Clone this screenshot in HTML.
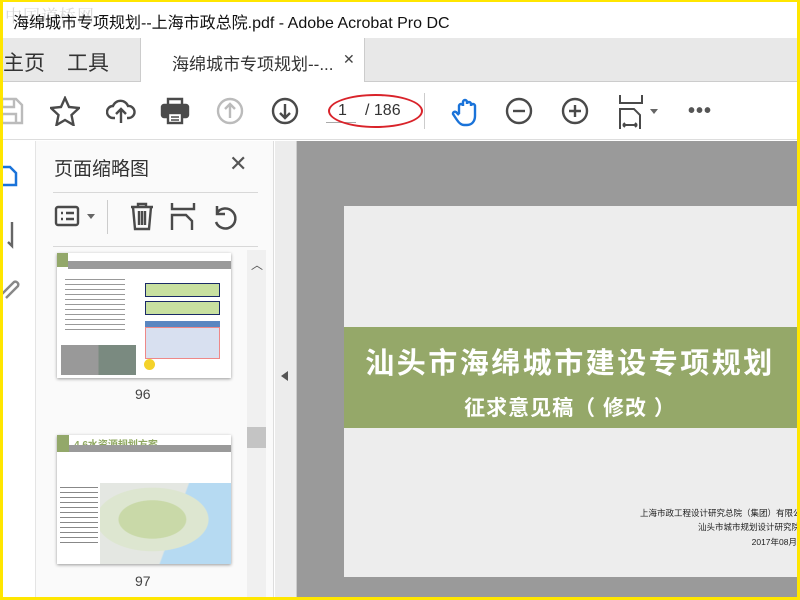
<!DOCTYPE html>
<html><head><meta charset="utf-8"><style>
*{margin:0;padding:0;box-sizing:border-box}
body{width:800px;height:600px;overflow:hidden;position:relative;background:#fff;font-family:"Liberation Sans","Noto Sans CJK SC",sans-serif;color:#222}
.a{position:absolute}
svg{position:absolute;fill:none;stroke:#4a4a4a;stroke-width:2.4}
</style></head><body>
<div class="a" style="left:0;top:0;width:800px;height:38px;background:#fff"></div>
<div class="a" style="left:5px;top:2px;font-size:17px;color:#d8d8d8;letter-spacing:1px;font-family:'Noto Serif CJK SC',serif">中国道桥网</div>
<div class="a" style="left:13px;top:9px;font-size:16px;color:#111">海绵城市专项规划--上海市政总院.pdf - Adobe Acrobat Pro DC</div>
<div class="a" style="left:0;top:38px;width:800px;height:44px;background:#e8e8e8;border-bottom:1px solid #ccc"></div>
<div class="a" style="left:3px;top:47px;font-size:21px;color:#333">主页</div>
<div class="a" style="left:67px;top:47px;font-size:21px;color:#333">工具</div>
<div class="a" style="left:140px;top:38px;width:225px;height:45px;background:#fff;border-left:1px solid #ccc;border-right:1px solid #ccc"></div>
<div class="a" style="left:172px;top:50px;font-size:17px;color:#333">海绵城市专项规划--...</div>
<div class="a" style="left:343px;top:51px;font-size:14px;color:#444">✕</div>
<div class="a" style="left:0;top:82px;width:800px;height:58px;background:#fff;border-bottom:1px solid #ddd"></div>
<svg style="left:0;top:96px" width="24" height="30" viewBox="0 0 24 30"><path d="M-4 3H16l6 6v18H-4z M2 3v8h12V3 M2 27v-9h14v9" stroke="#bbb"/></svg>
<svg style="left:50px;top:96px" width="30" height="30" viewBox="0 0 30 30"><path d="M15 2l4 9 10 1-7.5 7 2 10L15 24l-8.5 5 2-10L1 12l10-1z"/></svg>
<svg style="left:106px;top:96px" width="30" height="30" viewBox="0 0 30 30"><path d="M9 22H7a6 6 0 010-12 8 8 0 0115 0 5 5 0 011 12h-2 M15 27V13 M10 18l5-5 5 5"/></svg>
<svg style="left:160px;top:96px" width="30" height="30" viewBox="0 0 30 30"><path d="M8 9V3h14v6" /><rect x="2" y="9" width="26" height="12" rx="2" fill="#4a4a4a"/><rect x="8" y="17" width="14" height="10" fill="#fff"/><path d="M11 21h8M11 24h8" stroke-width="1.5"/></svg>
<svg style="left:216px;top:97px" width="28" height="28" viewBox="0 0 28 28"><circle cx="14" cy="14" r="12" stroke="#bbb"/><path d="M14 21V8M9 12l5-5 5 5" stroke="#bbb"/></svg>
<svg style="left:271px;top:97px" width="28" height="28" viewBox="0 0 28 28"><circle cx="14" cy="14" r="12"/><path d="M14 7v13M9 16l5 5 5-5"/></svg>
<div class="a" style="left:326px;top:99px;width:30px;height:24px;border-bottom:1px solid #aaa"></div>
<div class="a" style="left:338px;top:102px;font-size:16px;color:#333">1</div>
<div class="a" style="left:365px;top:102px;font-size:16px;color:#333">/ 186</div>
<div class="a" style="left:328px;top:94px;width:95px;height:34px;border:2.5px solid #d9232a;border-radius:50%"></div>
<div class="a" style="left:424px;top:93px;width:1px;height:36px;background:#ccc"></div>
<svg style="left:450px;top:96px" width="32" height="32" viewBox="0 0 32 32"><path d="M9 18V10a2 2 0 014 0V6a2 2 0 014 0v2a2 2 0 014 0v2a2 2 0 014 0v10c0 5-3 9-8 9h-3c-3 0-5-2-7-5l-4-6a2 2 0 013-2l3 3" stroke="#1a73d9"/></svg>
<svg style="left:505px;top:97px" width="28" height="28" viewBox="0 0 28 28"><circle cx="14" cy="14" r="12"/><path d="M8 14h12"/></svg>
<svg style="left:561px;top:97px" width="28" height="28" viewBox="0 0 28 28"><circle cx="14" cy="14" r="12"/><path d="M8 14h12M14 8v12"/></svg>
<svg style="left:617px;top:95px" width="28" height="34" viewBox="0 0 28 34"><path d="M3 0v8h22V0 M3 34V14h14l6 6v14 M6 30h14M6 30l2-2M6 30l2 2M20 30l-2-2M20 30l-2 2" stroke-width="2"/></svg>
<div class="a" style="left:650px;top:109px;border:4px solid transparent;border-top:5px solid #666"></div>
<div class="a" style="left:688px;top:100px;font-size:20px;color:#555;letter-spacing:1px;font-weight:bold">•••</div>
<div class="a" style="left:0;top:141px;width:36px;height:459px;background:#fff;border-right:1px solid #e4e4e4"></div>
<svg style="left:0;top:163px" width="22" height="28" viewBox="0 0 22 28"><path d="M-4 4h14l6 6v12H-4z" stroke="#1a73d9" stroke-width="2.5"/></svg>
<svg style="left:0;top:220px" width="18" height="30" viewBox="0 0 18 30"><path d="M12 2v24l-4-4" stroke="#666"/></svg>
<svg style="left:0;top:274px" width="22" height="28" viewBox="0 0 22 28"><path d="M2 20l12-12a3 3 0 014 4L6 24" stroke="#888"/></svg>
<div class="a" style="left:36px;top:141px;width:238px;height:459px;background:#fafafa;border-right:1px solid #ddd"></div>
<div class="a" style="left:54px;top:154px;font-size:19px;color:#333">页面缩略图</div>
<div class="a" style="left:229px;top:151px;font-size:22px;color:#555">✕</div>
<div class="a" style="left:53px;top:192px;width:205px;height:1px;background:#d8d8d8"></div>
<svg style="left:54px;top:204px" width="28" height="24" viewBox="0 0 28 24"><rect x="2" y="3" width="22" height="18" rx="2"/><path d="M7 9h2M7 15h2M12 9h8M12 15h8"/></svg>
<div class="a" style="left:87px;top:214px;border:4px solid transparent;border-top:5px solid #666"></div>
<div class="a" style="left:107px;top:200px;width:1px;height:34px;background:#ccc"></div>
<svg style="left:127px;top:201px" width="30" height="30" viewBox="0 0 30 30"><path d="M4 6h22M11 6V3h8v3M6 6l2 22h14l2-22M12 10v14M15 10v14M18 10v14"/></svg>
<svg style="left:170px;top:203px" width="26" height="28" viewBox="0 0 26 28"><path d="M2 0v6h22V0M2 27V12h14l6 6v9"/></svg>
<svg style="left:211px;top:203px" width="28" height="28" viewBox="0 0 28 28"><path d="M6 10a10 10 0 11-1 9M6 3v8h8" stroke-width="2.5"/></svg>
<div class="a" style="left:53px;top:246px;width:205px;height:1px;background:#d8d8d8"></div>
<div class="a" style="left:57px;top:253px;width:174px;height:125px;background:#fff;box-shadow:0 1px 3px #999;overflow:hidden">
 <div class="a" style="left:0;top:0;width:11px;height:14px;background:#93a86a"></div>
 <div class="a" style="left:11px;top:8px;width:163px;height:8px;background:#9a9a9a"></div>
 <div class="a" style="left:8px;top:22px;width:60px;height:55px;background:repeating-linear-gradient(#fff 0 4px,#999 4px 5px)"></div>
 <div class="a" style="left:88px;top:30px;width:75px;height:14px;background:#c8e0a0;border:1px solid #1a2a66"></div>
 <div class="a" style="left:88px;top:48px;width:75px;height:14px;background:#c8e0a0;border:1px solid #1a2a66"></div>
 <div class="a" style="left:88px;top:68px;width:75px;height:6px;background:#5a86c0"></div>
 <div class="a" style="left:88px;top:74px;width:75px;height:32px;background:#d8e0f0;border:1px solid #e88"></div>
 <div class="a" style="left:4px;top:92px;width:75px;height:30px;background:linear-gradient(90deg,#999 0 50%,#7a8a80 50%)"></div>
 <div class="a" style="left:87px;top:106px;width:11px;height:11px;border-radius:50%;background:#f4d22a"></div>
</div>
<div class="a" style="left:135px;top:386px;font-size:14px;color:#444">96</div>
<div class="a" style="left:57px;top:435px;width:174px;height:129px;background:#fff;box-shadow:0 1px 3px #999;overflow:hidden">
 <div class="a" style="left:0;top:0;width:12px;height:17px;background:#93a86a"></div>
 <div class="a" style="left:17px;top:1px;font-size:10px;font-weight:bold;color:#8fa860">4.6水资源规划方案</div>
 <div class="a" style="left:12px;top:10px;width:162px;height:7px;background:#9a9a9a"></div>
 <div class="a" style="left:3px;top:48px;width:38px;height:60px;background:repeating-linear-gradient(#fff 0 4px,#888 4px 5px)"></div>
 <div class="a" style="left:43px;top:48px;width:131px;height:81px;background:radial-gradient(ellipse at 40% 45%,#c9d9a8 0 30%,#dde6d0 31% 50%,transparent 51%),linear-gradient(110deg,#e4e7e2 0 55%,#b6daf2 56%)"></div>
</div>
<div class="a" style="left:135px;top:573px;font-size:14px;color:#444">97</div>
<div class="a" style="left:247px;top:250px;width:19px;height:350px;background:#f0f0f0"></div>
<div class="a" style="left:251px;top:256px;font-size:12px;color:#555">︿</div>
<div class="a" style="left:247px;top:427px;width:19px;height:21px;background:#c4c4c4"></div>
<div class="a" style="left:275px;top:141px;width:22px;height:459px;background:#ececec;border-right:1px solid #ccc"></div>
<div class="a" style="left:281px;top:371px;border:5px solid transparent;border-right:7px solid #555;border-left:0"></div>
<div class="a" style="left:297px;top:141px;width:503px;height:459px;background:#9a9a9a"></div>
<div class="a" style="left:344px;top:206px;width:456px;height:371px;background:#ededed"></div>
<div class="a" style="left:344px;top:327px;width:456px;height:101px;background:#95a869"></div>
<div class="a" style="left:344px;top:340px;width:452px;text-align:center;font-size:29px;font-weight:bold;color:#fff;letter-spacing:2.5px">汕头市海绵城市建设专项规划</div>
<div class="a" style="left:344px;top:392px;width:452px;text-align:center;font-size:21px;font-weight:bold;color:#fff;letter-spacing:1px">征求意见稿（ 修改 ）</div>
<div class="a" style="left:640px;top:507px;width:160px;text-align:right;font-size:8.5px;color:#222;white-space:nowrap">上海市政工程设计研究总院（集团）有限公司</div>
<div class="a" style="left:640px;top:521px;width:160px;text-align:right;font-size:8.5px;color:#222">汕头市城市规划设计研究院</div>
<div class="a" style="left:640px;top:536px;width:157px;text-align:right;font-size:8.5px;color:#222">2017年08月</div>
<div class="a" style="left:0;top:0;width:800px;height:600px;border:3px solid #ffe600;border-top-width:2px"></div>
</body></html>
